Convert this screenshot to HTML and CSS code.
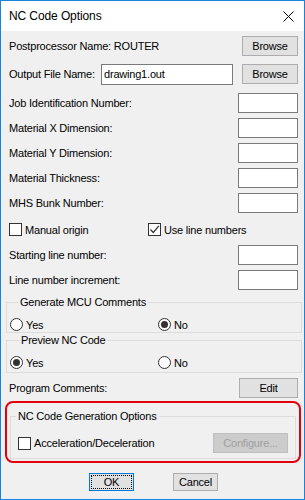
FILE: index.html
```html
<!DOCTYPE html>
<html lang="en">
<head>
    <meta charset="UTF-8">
    <title>NC Code Options</title>
    <link rel="stylesheet" href="styles.css">
</head>
<body>
    <div class="window">
        <div class="titlebar">
            <span class="title">NC Code Options</span>
            <svg class="close" width="11" height="11" viewBox="0 0 11 11">
                <path d="M0.5 0.5 L10.5 10.5 M10.5 0.5 L0.5 10.5" stroke="#000" stroke-width="1" fill="none"/>
            </svg>
        </div>

        <div class="content">
            <div class="row row-post">
                <span>Postprocessor Name: ROUTER</span>
                <button class="btn btn-browse">Browse</button>
            </div>

            <div class="row row-file">
                <span class="file-label">Output File Name:</span>
                <div class="field field-file">drawing1.out</div>
                <button class="btn btn-browse">Browse</button>
            </div>

            <div class="row field-row first">
                <span>Job Identification Number:</span>
                <div class="field"></div>
            </div>
            <div class="row field-row">
                <span>Material X Dimension:</span>
                <div class="field"></div>
            </div>
            <div class="row field-row">
                <span>Material Y Dimension:</span>
                <div class="field"></div>
            </div>
            <div class="row field-row">
                <span>Material Thickness:</span>
                <div class="field"></div>
            </div>
            <div class="row field-row">
                <span>MHS Bunk Number:</span>
                <div class="field"></div>
            </div>

            <div class="row check-row">
                <label class="check col-left"><span class="box"></span>Manual origin</label>
                <label class="check checked"><span class="box">
                    <svg width="11" height="11" viewBox="0 0 11 11">
                        <path d="M1.5 5.5 L4.3 8.5 L9.8 1.8" stroke="#333" stroke-width="1.2" fill="none"/>
                    </svg>
                </span>Use line numbers</label>
            </div>

            <div class="row field-row start-row">
                <span>Starting line number:</span>
                <div class="field"></div>
            </div>
            <div class="row field-row">
                <span>Line number increment:</span>
                <div class="field"></div>
            </div>

            <fieldset class="group group-mcu">
                <legend>Generate MCU Comments</legend>
                <div class="radios">
                    <label class="radio col-left"><span class="dot"></span>Yes</label>
                    <label class="radio on"><span class="dot"></span>No</label>
                </div>
            </fieldset>

            <fieldset class="group group-preview">
                <legend>Preview NC Code</legend>
                <div class="radios">
                    <label class="radio col-left on"><span class="dot"></span>Yes</label>
                    <label class="radio"><span class="dot"></span>No</label>
                </div>
            </fieldset>

            <div class="row row-comments">
                <span>Program Comments:</span>
                <button class="btn btn-edit">Edit</button>
            </div>

            <div class="highlight">
                <fieldset class="group group-nc">
                    <legend>NC Code Generation Options</legend>
                    <div class="nc-row">
                        <label class="check"><span class="box"></span>Acceleration/Deceleration</label>
                        <button class="btn btn-config" disabled>Configure...</button>
                    </div>
                </fieldset>
            </div>

            <div class="actions">
                <button class="btn btn-ok"><span class="focus">OK</span></button>
                <button class="btn btn-cancel">Cancel</button>
            </div>
        </div>
    </div>
</body>
</html>
```

FILE: styles.css
```css
body {
    margin: 0;
    padding: 0;
    background: #ffffff;
    font-family: "Liberation Sans", Arial, sans-serif;
    font-size: 11px;
    letter-spacing: -0.2px;
    color: #000000;
}
.window {
    width: 305px;
    height: 500px;
    box-sizing: border-box;
    border: 1px solid #1883d7; /* accent colour window frame */
    background: #f0f0f0;
    display: flex;
    flex-direction: column;
}
.titlebar {
    height: 30px;
    background: #ffffff;
    display: flex;
    align-items: center;
    justify-content: space-between;
    padding: 0 10px 0 8px;
}
.title {
    font-size: 12px;
    letter-spacing: -0.1px;
}
.close {
    display: block;
    margin-top: 1px;
}
.content {
    padding: 5px 6px 0 8px;
}
.row {
    display: flex;
    align-items: center;
    justify-content: space-between;
}
.btn {
    font-family: inherit;
    font-size: 11px;
    letter-spacing: -0.2px;
    color: #000000;
    background: #e1e1e1;
    border: 1px solid #adadad;
    padding: 0;
    height: 20px;
    box-sizing: border-box;
}
.btn-browse {
    width: 56px;
}
.row-post {
    height: 20px;
}
.row-file {
    margin-top: 8px;
    height: 21px;
    align-items: flex-start;
}
.file-label {
    margin-top: 4px;
    width: 92px;
}
.field {
    width: 60px;
    height: 20px;
    box-sizing: border-box;
    background: #ffffff;
    border: 1px solid #7a7a7a;
}
.field-file {
    width: 132px;
    height: 21px;
    padding-left: 2px;
    line-height: 18px;
    margin-right: auto;
}
.field-row {
    height: 20px;
    margin-top: 5px;
}
.field-row.first {
    margin-top: 8px;
}
.start-row {
    margin-top: 9px;
}
.check-row {
    margin-top: 10px;
    height: 13px;
    justify-content: flex-start;
}
.check, .radio {
    display: flex;
    align-items: center;
}
.col-left {
    width: 139px;
}
.box {
    width: 13px;
    height: 13px;
    box-sizing: border-box;
    border: 1px solid #333333;
    background: #ffffff;
    margin-right: 3px;
    display: flex;
    align-items: center;
    justify-content: center;
}
.box svg {
    display: block;
}
.group {
    border: 1px solid #dcdcdc;
    margin: 5px -4px 0 -3px;
    padding: 0 0 1px 3px;
}
.group legend {
    padding: 0 2px;
    margin-left: 8px;
    line-height: 14px;
}
.radios {
    display: flex;
    margin-top: 9px;
    height: 13px;
}
.radios .col-left {
    width: 148px;
}
.dot {
    width: 13px;
    height: 13px;
    box-sizing: border-box;
    border: 1px solid #333333;
    border-radius: 50%;
    background: #ffffff;
    margin-right: 3px;
    display: flex;
    align-items: center;
    justify-content: center;
}
.radio.on .dot::after {
    content: "";
    width: 7px;
    height: 7px;
    border-radius: 50%;
    background: #333333;
}
.group-preview {
    margin-top: 0;
    padding-bottom: 3px;
}
.group-preview legend {
    margin-left: 9px;
}
.row-comments {
    margin-top: 5px;
    height: 20px;
}
.btn-edit {
    width: 59px;
}
.highlight {
    margin: 3px -3px 0 -4px;
    border: 2px solid #e3000b;
    border-radius: 8px;
    padding: 6px 3px 2px 3px;
}
.group-nc {
    margin: 0;
    padding: 0 7px 5px 7px;
}
.group-nc legend {
    margin-left: -2px;
}
.nc-row {
    margin-top: 10px;
    height: 20px;
    display: flex;
    align-items: center;
    justify-content: space-between;
}
.btn-config {
    width: 75px;
    color: #a0a0a0;
    background: #cccccc;
    border-color: #bfbfbf;
}
.actions {
    margin-top: 10px;
    display: flex;
    justify-content: center;
    gap: 39px;
}
.btn-ok, .btn-cancel {
    width: 45px;
    height: 18px;
}
.btn-ok {
    border: 1px solid #0078d7;
    padding: 1px;
}
.focus {
    display: block;
    height: 100%;
    box-sizing: border-box;
    border: 1px dotted #000000;
    line-height: 12px;
}
```
